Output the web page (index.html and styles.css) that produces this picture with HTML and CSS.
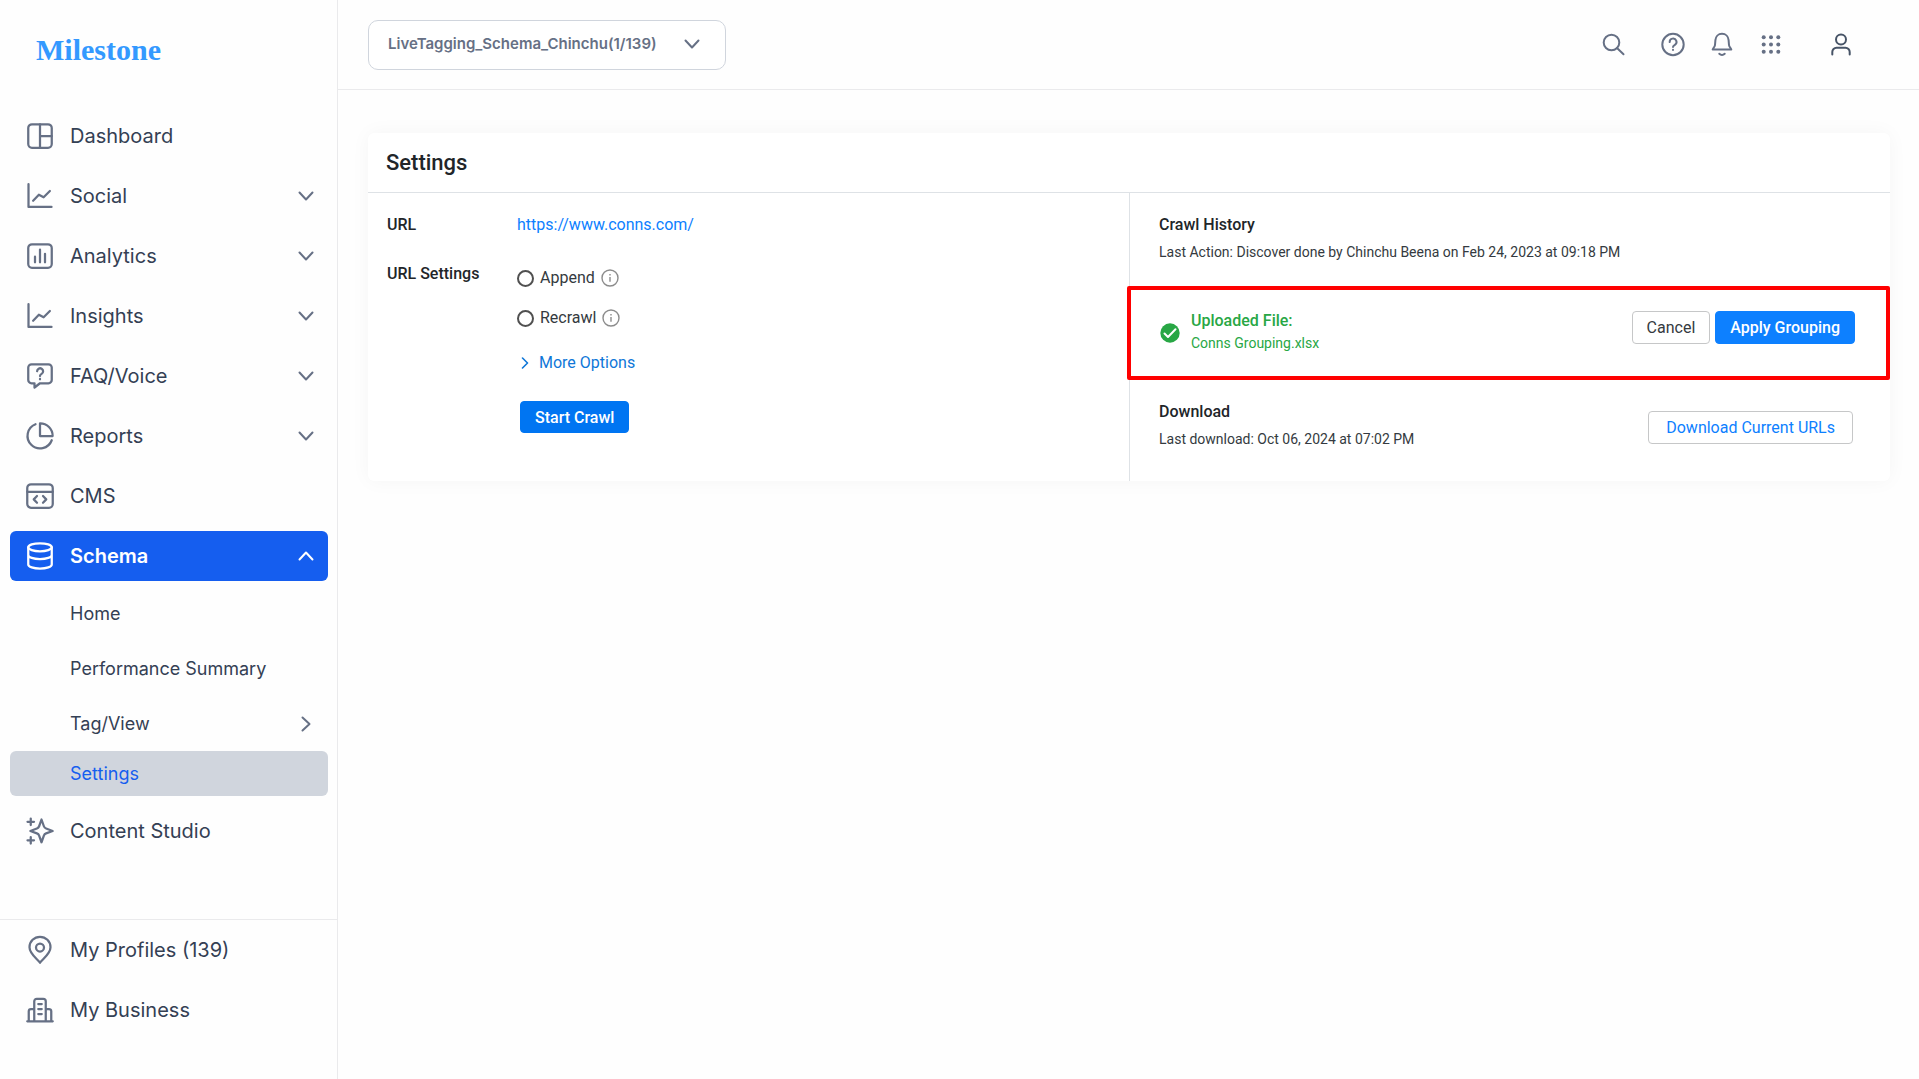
FILE: index.html
```html
<!DOCTYPE html>
<html lang="en">
<head>
    <meta charset="UTF-8">
    <meta name="viewport" content="width=device-width, initial-scale=1.0">
    <title>Milestone - Schema Settings</title>
    <link rel="stylesheet" href="styles.css">
</head>
<body>

    <aside class="sidebar">
        <a href="#" class="logo">Milestone</a>

        <nav class="menu">
            <a href="#" class="menu-item">
                <svg class="icon" viewBox="0 0 24 24"><rect x="2.6" y="2.6" width="18.8" height="18.8" rx="3"/><path d="M12 2.6v18.8M12 12h9.4"/></svg>
                <span>Dashboard</span>
            </a>
            <a href="#" class="menu-item">
                <svg class="icon" viewBox="0 0 24 24"><path d="M2.8 2.5v18.2h18.4M6.5 15.8l4.6-4.8 3.8 2 5-5"/></svg>
                <span>Social</span>
                <svg class="chevron" viewBox="0 0 20 20"><path d="M3.5 6.5l6.5 7 6.5-7"/></svg>
            </a>
            <a href="#" class="menu-item">
                <svg class="icon" viewBox="0 0 24 24"><rect x="2.6" y="2.6" width="18.8" height="18.8" rx="3"/><path d="M8 12.5V17M12 6.8V17M16 10.2V17"/></svg>
                <span>Analytics</span>
                <svg class="chevron" viewBox="0 0 20 20"><path d="M3.5 6.5l6.5 7 6.5-7"/></svg>
            </a>
            <a href="#" class="menu-item">
                <svg class="icon" viewBox="0 0 24 24"><path d="M2.8 2.5v18.2h18.4M6.5 15.8l4.6-4.8 3.8 2 5-5"/></svg>
                <span>Insights</span>
                <svg class="chevron" viewBox="0 0 20 20"><path d="M3.5 6.5l6.5 7 6.5-7"/></svg>
            </a>
            <a href="#" class="menu-item">
                <svg class="icon" viewBox="0 0 24 24"><path d="M5.2 2.6h13.6a2.6 2.6 0 0 1 2.6 2.6v10a2.6 2.6 0 0 1-2.6 2.6H12l-4.4 3.4v-3.4H5.2a2.6 2.6 0 0 1-2.6-2.6v-10a2.6 2.6 0 0 1 2.6-2.6z"/><path d="M9.7 8.2a2.4 2.4 0 1 1 3.6 2.1c-.8.5-1.3.8-1.3 1.7"/><path d="M12 14.3v.3"/></svg>
                <span>FAQ/Voice</span>
                <svg class="chevron" viewBox="0 0 20 20"><path d="M3.5 6.5l6.5 7 6.5-7"/></svg>
            </a>
            <a href="#" class="menu-item">
                <svg class="icon" viewBox="0 0 24 24"><path d="M8.4 2.6a10 10 0 1 0 13 12.8"/><path d="M12 1.9a10 10 0 0 1 10.1 10.1H12z"/></svg>
                <span>Reports</span>
                <svg class="chevron" viewBox="0 0 20 20"><path d="M3.5 6.5l6.5 7 6.5-7"/></svg>
            </a>
            <a href="#" class="menu-item">
                <svg class="icon" viewBox="0 0 24 24"><rect x="1.8" y="2.6" width="20.4" height="18.8" rx="3"/><path d="M1.8 8.6h20.4M9.6 12l-2.6 2.7 2.6 2.7M14.4 12l2.6 2.7-2.6 2.7"/></svg>
                <span>CMS</span>
            </a>
            <a href="#" class="menu-item active">
                <svg class="icon" viewBox="0 0 24 24"><ellipse cx="12" cy="5" rx="9.4" ry="3.2"/><path d="M2.6 5v13.8c0 1.8 4.2 3.2 9.4 3.2s9.4-1.4 9.4-3.2V5M2.6 11.2c0 1.8 4.2 3.2 9.4 3.2s9.4-1.4 9.4-3.2"/></svg>
                <span>Schema</span>
                <svg class="chevron" viewBox="0 0 20 20"><path d="M3.5 13.5l6.5-7 6.5 7"/></svg>
            </a>

            <div class="submenu">
                <a href="#" class="submenu-item">Home</a>
                <a href="#" class="submenu-item">Performance Summary</a>
                <a href="#" class="submenu-item">
                    <span>Tag/View</span>
                    <svg class="chevron" viewBox="0 0 20 20"><path d="M6.5 3.5l7 6.5-7 6.5"/></svg>
                </a>
                <a href="#" class="submenu-item selected">Settings</a>
            </div>

            <a href="#" class="menu-item">
                <svg class="icon" viewBox="0 0 24 24"><path d="M13.2 2.8l1.9 5.4a3 3 0 0 0 1.8 1.8l5.2 2-5.2 1.9a3 3 0 0 0-1.8 1.8l-1.9 5.3-1.9-5.3a3 3 0 0 0-1.8-1.8L4.3 12l5.2-2a3 3 0 0 0 1.8-1.8z"/><path d="M4.6 2v5.2M2 4.6h5.2M4.6 16.8V22M2 19.4h5.2"/></svg>
                <span>Content Studio</span>
            </a>
        </nav>

        <nav class="menu menu-bottom">
            <a href="#" class="menu-item">
                <svg class="icon" viewBox="0 0 24 24"><path d="M12 22.2c2-3 8.4-7 8.4-12.4a8.4 8.4 0 0 0-16.8 0c0 5.4 6.4 9.4 8.4 12.4z"/><circle cx="12" cy="10" r="3.2"/></svg>
                <span>My Profiles (139)</span>
            </a>
            <a href="#" class="menu-item">
                <svg class="icon" viewBox="0 0 24 24"><path d="M1.8 21h20.4M7.4 21V5a2 2 0 0 1 2-2h5.2a2 2 0 0 1 2 2v16M7.4 11.2H4.8a1.8 1.8 0 0 0-1.8 1.8v8M16.6 11.2h2.6a1.8 1.8 0 0 1 1.800 1.800v8M10.600 7.200h2.800M10.600 11.200h2.800M10.600 15.200h2.800"/></svg>
                <span>My Business</span>
            </a>
        </nav>
    </aside>

    <div class="page">
        <header class="topbar">
            <div class="profile-select">
                <select aria-label="Profile">
                    <option>LiveTagging_Schema_Chinchu(1/139)</option>
                </select>
                <svg class="chevron" viewBox="0 0 20 20"><path d="M3.5 6.5l6.5 7 6.5-7"/></svg>
            </div>

            <div class="tools">
                <button class="tool search" aria-label="Search">
                    <svg class="icon" viewBox="0 0 30 30"><circle cx="13.5" cy="12.5" r="7.8"/><path d="M19 18l6.5 6.2"/></svg>
                </button>
                <button class="tool" aria-label="Help">
                    <svg class="icon" viewBox="0 0 30 30"><circle cx="15" cy="14.500" r="10.700"/><path d="M11.700 12.100a3.400 3.400 0 1 1 5.200 2.700c-1.200.7-1.900 1.100-1.900 2.200"/><path d="M15 19.700v.2"/></svg>
                </button>
                <button class="tool" aria-label="Notifications">
                    <svg class="icon" viewBox="0 0 30 30"><path d="M15 3.800c-3.800 0-6.300 2.800-6.600 6.400L8 15c-.1 1.600-2 3.300-2.300 4.500h18.600c-.3-1.200-2.200-2.900-2.300-4.500l-.4-4.800c-.3-3.600-2.800-6.400-6.600-6.400z"/><path d="M12.300 23.800c1.500 1.500 3.900 1.500 5.400 0"/></svg>
                </button>
                <button class="tool" aria-label="Apps">
                    <svg class="icon dots" viewBox="0 0 30 30"><circle cx="7.700" cy="7.200" r="2"/><circle cx="15" cy="7.200" r="2"/><circle cx="22.300" cy="7.200" r="2"/><circle cx="7.700" cy="14.500" r="2"/><circle cx="15" cy="14.500" r="2"/><circle cx="22.300" cy="14.500" r="2"/><circle cx="7.700" cy="21.800" r="2"/><circle cx="15" cy="21.800" r="2"/><circle cx="22.300" cy="21.800" r="2"/></svg>
                </button>
                <button class="tool user" aria-label="Account">
                    <svg class="icon" viewBox="0 0 30 30"><circle cx="15" cy="9.500" r="5"/><path d="M6.300 24.500V22a4.200 4.200 0 0 1 4.200-4.200h9a4.200 4.200 0 0 1 4.200 4.200v2.500"/></svg>
                </button>
            </div>
        </header>

        <main class="card">
            <h1 class="card-title">Settings</h1>
            <div class="card-body">
                <section class="url-settings">
                    <h2 class="label">URL</h2>
                    <a href="#" class="site-link">https://www.conns.com/</a>

                    <h2 class="label">URL Settings</h2>
                    <div class="crawl-options">
                        <div class="option">
                            <input type="radio" name="crawl" id="append">
                            <label for="append">Append</label>
                            <svg class="info" viewBox="0 0 18 18"><circle cx="9" cy="9" r="8"/><path d="M9 8v4.800M9 5v1.400"/></svg>
                        </div>
                        <div class="option">
                            <input type="radio" name="crawl" id="recrawl">
                            <label for="recrawl">Recrawl</label>
                            <svg class="info" viewBox="0 0 18 18"><circle cx="9" cy="9" r="8"/><path d="M9 8v4.800M9 5v1.400"/></svg>
                        </div>
                        <a href="#" class="more-options">
                            <svg viewBox="0 0 10 12"><path d="M2.500 1l5 5-5 5"/></svg>
                            More Options
                        </a>
                        <button class="btn btn-start">Start Crawl</button>
                    </div>
                </section>

                <div class="activity">
                    <section class="activity-row">
                        <div>
                            <h2 class="label">Crawl History</h2>
                            <p class="detail">Last Action: Discover done by Chinchu Beena on Feb 24, 2023 at 09:18 PM</p>
                        </div>
                    </section>

                    <section class="uploaded">
                        <svg class="check" viewBox="0 0 20 20"><circle cx="10" cy="10" r="9.700"/><path d="M4.500 10.500l3.500 3.500 7.500-7.700"/></svg>
                        <div class="uploaded-file">
                            <h2 class="label">Uploaded File:</h2>
                            <p>Conns Grouping.xlsx</p>
                        </div>
                        <div class="uploaded-actions">
                            <button class="btn btn-cancel">Cancel</button>
                            <button class="btn btn-apply">Apply Grouping</button>
                        </div>
                    </section>

                    <section class="activity-row download">
                        <div>
                            <h2 class="label">Download</h2>
                            <p class="detail">Last download: Oct 06, 2024 at 07:02 PM</p>
                        </div>
                        <button class="btn btn-download">Download Current URLs</button>
                    </section>
                </div>
            </div>
        </main>
    </div>

</body>
</html>
```

FILE: styles.css
```css
* {
    box-sizing: border-box;
}

body {
    margin: 0;
    display: flex;
    min-height: 100vh;
    background-color: #fefefe;
    font-family: Roboto, "Liberation Sans", sans-serif;
    font-size: 16px;
    line-height: 24px;
    color: #212529;
}

h1, h2, p {
    margin: 0;
}

a {
    text-decoration: none;
}

button {
    font-family: inherit;
    cursor: pointer;
}

svg {
    flex: none;
    fill: none;
    stroke: currentColor;
    stroke-linecap: round;
    stroke-linejoin: round;
}

/* Sidebar */
.sidebar {
    flex: none;
    display: flex;
    flex-direction: column;
    width: 338px;
    border-right: 1px solid #eaeaec;
    font-family: Inter, "Liberation Sans", sans-serif;
}

.logo {
    padding: 30px 36px 41px;
    font-family: "Liberation Serif", serif;
    font-size: 30px;
    font-weight: bold;
    line-height: 40px;
    color: #3399ff;
}

.menu {
    display: flex;
    flex-direction: column;
    gap: 10px;
    padding: 0 9px 0 10px;
}

.menu-bottom {
    margin-top: auto;
    padding-top: 5px;
    padding-bottom: 44px;
    border-top: 1px solid #eaeaec;
}

.menu-item {
    display: flex;
    align-items: center;
    gap: 15px;
    height: 50px;
    padding: 0 12px 0 15px;
    border-radius: 6px;
    font-size: 20px;
    color: #344054;
}

.menu-item .icon {
    width: 30px;
    height: 30px;
    stroke: #667085;
    stroke-width: 1.8;
}

.chevron {
    width: 20px;
    height: 20px;
    margin-left: auto;
    stroke: #667085;
    stroke-width: 2;
}

.menu-item.active {
    background-color: #155eef;
    color: #fff;
    font-weight: 600;
}

.menu-item.active svg {
    stroke: #fff;
}

.submenu {
    margin-top: -5px;
}

.submenu-item {
    display: flex;
    align-items: center;
    height: 55px;
    padding: 0 12px 0 60px;
    border-radius: 6px;
    font-size: 18px;
    color: #344054;
}

.submenu-item.selected {
    height: 45px;
    background-color: #d0d5dd;
    color: #155eef;
}

/* Top bar */
.page {
    flex: 1;
    min-width: 0;
}

.topbar {
    display: flex;
    align-items: center;
    justify-content: space-between;
    height: 90px;
    padding: 0 63px 0 30px;
    border-bottom: 1px solid #eaeaec;
}

.profile-select {
    position: relative;
}

.profile-select select {
    appearance: none;
    height: 50px;
    padding: 0 68px 2px 19px;
    border: 1px solid #d0d5dd;
    border-radius: 10px;
    background-color: #fff;
    font-family: Inter, "Liberation Sans", sans-serif;
    font-size: 15px;
    font-weight: 600;
    color: #667085;
}

.profile-select .chevron {
    position: absolute;
    top: 14px;
    right: 24px;
    pointer-events: none;
}

.tools {
    display: flex;
    gap: 19px;
}

.tool {
    width: 30px;
    height: 30px;
    padding: 0;
    border: none;
    background: none;
    color: #667085;
}

.tool .icon {
    display: block;
    width: 30px;
    height: 30px;
    stroke-width: 2;
}

.tool .dots {
    fill: currentColor;
    stroke: none;
}

.tool.search {
    margin-right: 11px;
}

.tool.user {
    margin-left: 21px;
    color: #475467;
}

/* Settings card */
.card {
    margin: 43px 29px 30px 30px;
    border-radius: 6px;
    background-color: #fff;
    box-shadow: 0 0 20px rgba(0, 0, 0, 0.04);
}

.card-title {
    padding: 15px 18px 14px;
    border-bottom: 1px solid #dee2e6;
    font-size: 22px;
    font-weight: 500;
    line-height: 30px;
}

.card-body {
    display: grid;
    grid-template-columns: 1fr 1fr;
}

.label {
    font-size: 16px;
    font-weight: 500;
    line-height: 24px;
}

.url-settings {
    display: grid;
    grid-template-columns: 130px 1fr;
    align-content: start;
    gap: 25px 0;
    padding: 20px 19px 48px;
}

.site-link {
    color: #0d80ff;
}

.crawl-options {
    display: flex;
    flex-direction: column;
    align-items: flex-start;
    padding-top: 4px;
}

.option {
    display: flex;
    align-items: center;
    gap: 6px;
    margin-bottom: 16px;
    color: #343a40;
}

.option input {
    appearance: none;
    width: 17px;
    height: 17px;
    margin: 0;
    border: 2px solid #505050;
    border-radius: 50%;
}

.option input:checked {
    background-color: #0d80ff;
}

.info {
    width: 18px;
    height: 18px;
    stroke: #8c8c8c;
    stroke-width: 1.4;
    stroke-linecap: butt;
}

.more-options {
    display: flex;
    align-items: center;
    gap: 9px;
    margin: 5px 0 26px 3px;
    color: #0f77d8;
}

.more-options svg {
    width: 10px;
    height: 12px;
    stroke-width: 1.6;
}

.btn {
    height: 33px;
    padding: 0 14px;
    border: 1px solid #c6c7c8;
    border-radius: 4px;
    background-color: #fff;
    font-size: 16px;
    color: #343a40;
}

.btn-start {
    height: 32px;
    margin-left: 3px;
    border-color: #0075f2;
    background-color: #0075f2;
    font-weight: 500;
    color: #fff;
}

/* Crawl history, uploaded file and download */
.activity {
    border-left: 1px solid #dee2e6;
}

.activity-row {
    display: flex;
    justify-content: space-between;
    align-items: flex-start;
    padding: 20px 37px 24px 29px;
}

.detail {
    margin-top: 5px;
    font-size: 14px;
    line-height: 20px;
    color: #343a40;
}

.uploaded {
    display: flex;
    align-items: flex-start;
    margin-left: -3px;
    padding: 19px 31px 22px 29px;
    border: 4px solid #ff0000;
    border-radius: 2px;
    color: #28a745;
}

.uploaded-file {
    margin-left: 11px;
}

.uploaded-file p {
    font-size: 14px;
    line-height: 21px;
}

.uploaded-actions {
    display: flex;
    gap: 5px;
    margin: 2px 0 0 auto;
}

.check {
    width: 20px;
    height: 20px;
    margin-top: 14px;
    stroke: #fff;
    stroke-width: 2;
}

.check circle {
    fill: #28a745;
    stroke: none;
}

.btn-apply {
    border-color: #0d80ff;
    background-color: #0d80ff;
    font-weight: 500;
    color: #fff;
}

.download {
    padding-bottom: 32px;
}

.btn-download {
    margin-top: 11px;
    padding: 0 17px;
    color: #0d80ff;
}
```
